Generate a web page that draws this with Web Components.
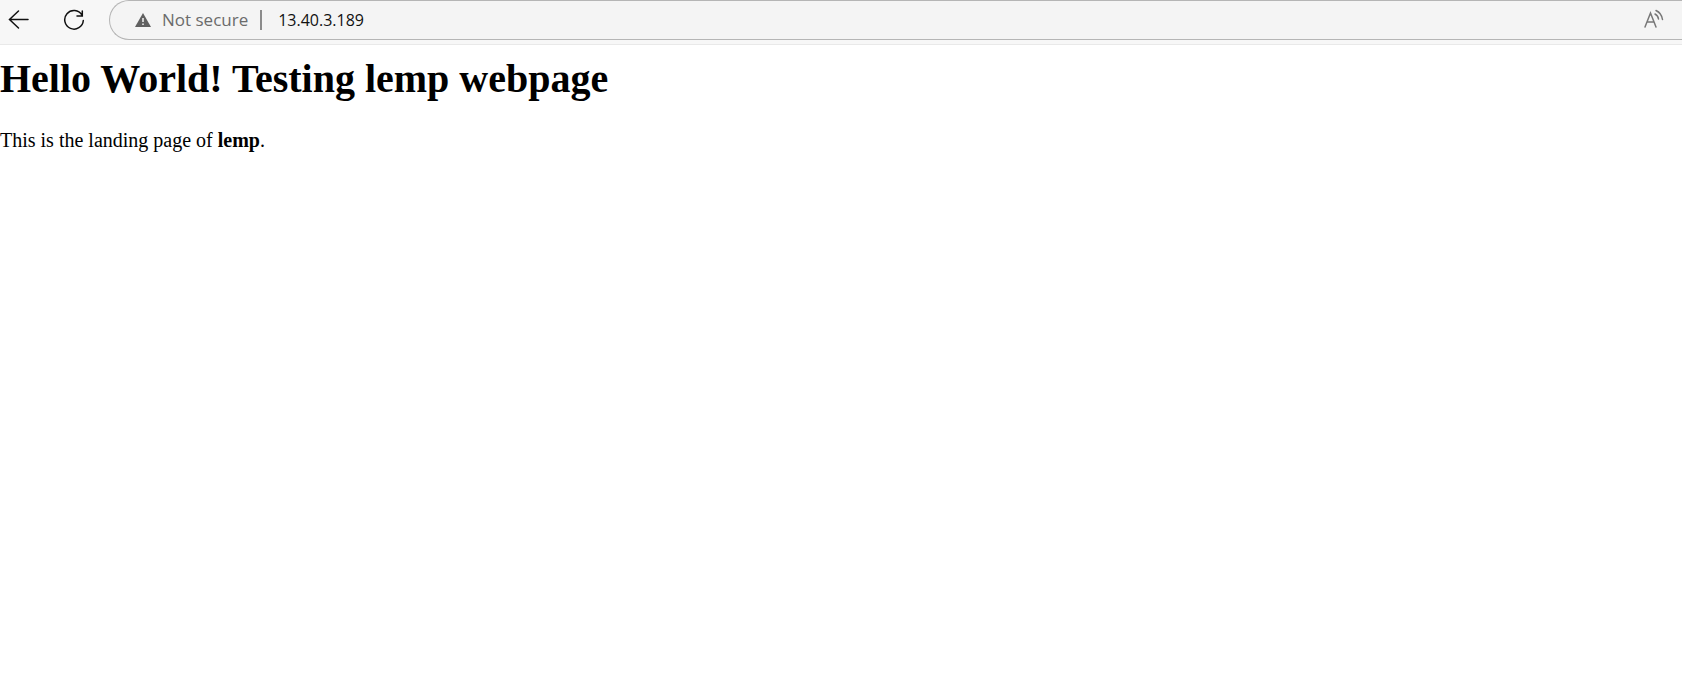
<!DOCTYPE html>
<html lang="en">
<head>
<meta charset="utf-8">
<title>Hello World! Testing lemp webpage</title>
<style>
body { margin: 0; background: #fff; overflow-x: hidden; }
</style>
</head>
<body>
<browser-window>
  <browser-toolbar slot="toolbar">
    <icon-button slot="nav" label="Back" icon="back"></icon-button>
    <icon-button slot="nav" label="Refresh" icon="refresh"></icon-button>
    <address-bar status="Not secure" address="13.40.3.189"></address-bar>
  </browser-toolbar>
  <landing-page>
    <span slot="title">Hello World! Testing lemp webpage</span>
    This is the landing page of <strong>lemp</strong>.
  </landing-page>
</browser-window>
<script>
const define = (name, html, setup) => customElements.define(name, class extends HTMLElement {
  constructor() {
    super();
    this.attachShadow({ mode: 'open' }).innerHTML = html;
  }
  connectedCallback() { if (setup) setup(this, this.shadowRoot); }
});

const icons = {
  back: '<path d="M28 9.500H10M18.500 1L9.500 9.500L18.500 18"/>',
  refresh: '<path d="M27 5A9.300 9.300 0 1 0 28.300 10.500M27.300 1V6H22"/>',
  read: '<path d="M1 17L6.500 3L12 17M3 12H10M11 4Q14 5.500 14.500 9M12 .500Q17.500 3 18.500 9.500"/>'
};

define('icon-button', `
<style>
:host { display: block; }
button { display: block; padding: 0; border: 0; background: none; color: inherit; }
svg { display: block; fill: none; stroke: currentColor; stroke-width: 1.5; stroke-linecap: round; }
</style>
<button type="button"><svg aria-hidden="true" height="22"></svg></button>`, (host, root) => {
  const icon = host.getAttribute('icon');
  const svg = root.querySelector('svg');
  const width = icon === 'read' ? 22 : 38;
  svg.setAttribute('width', width);
  svg.setAttribute('viewBox', `0 -1 ${width} 22`);
  svg.innerHTML = icons[icon];
  root.querySelector('button').setAttribute('aria-label', host.getAttribute('label'));
});

define('address-bar', `
<style>
:host { display: flex; align-items: center; box-sizing: border-box; height: 40px; padding: 0 16px 0 25px;
  border: 1px solid #b5b5b5; border-right: 0; border-radius: 20px 0 0 20px; background: #f4f4f4;
  font: 17px/24px "Open Sans", sans-serif; color: #6b6b6b; }
.warning { margin-right: 11px; }
.divider { width: 2px; height: 20px; margin: 0 16px 0 12px; background: #8b8b8b; }
span { white-space: nowrap; }
input { flex: 1; min-width: 0; padding: 0; border: 0; outline: 0; background: none; color: #111; font-size: 16px; line-height: 24px; font-family: inherit; }
icon-button { color: #777; }
</style>
<svg class="warning" width="16" height="14" viewBox="0 0 16 14" aria-hidden="true"><path d="M8 0L16 14H0Z" fill="#606060"/><path d="M8 5V9M8 10.500V12" stroke="#f4f4f4" stroke-width="1.500"/></svg>
<span></span>
<div class="divider"></div>
<input type="text" aria-label="Address" spellcheck="false">
<icon-button label="Read aloud" icon="read"></icon-button>`, (host, root) => {
  root.querySelector('span').textContent = host.getAttribute('status');
  root.querySelector('input').value = host.getAttribute('address');
});

define('browser-toolbar', `
<style>
:host { display: flex; align-items: center; padding-bottom: 4px; border-bottom: 1px solid #e9e9e9; background: #f7f7f7; color: #111; }
nav { display: flex; gap: 17px; margin-right: 16px; }
::slotted(address-bar) { flex: 1; }
</style>
<nav aria-label="Navigation"><slot name="nav"></slot></nav><slot></slot>`);

define('landing-page', `
<style>
:host { display: block; padding-top: 11px; color: #000; font-family: "Liberation Serif", serif; }
h1 { margin: 0 0 27px; font-size: 40px; line-height: 46px; }
p { margin: 0; font-size: 20px; line-height: 23px; }
</style>
<h1><slot name="title"></slot></h1>
<p><slot></slot></p>`);

define('browser-window', `
<style>:host { display: block; } header, main { display: block; }</style>
<header><slot name="toolbar"></slot></header>
<main><slot></slot></main>`);
</script>
</body>
</html>
